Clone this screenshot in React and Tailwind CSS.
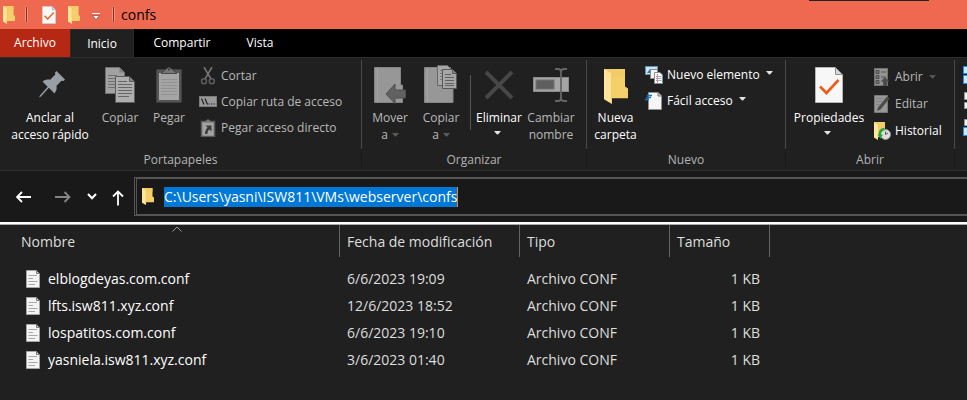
import React from "react";

function FolderIcon({ className, viewBox = "0 0 24 36" }) {
  return (
    <svg viewBox={viewBox} className={className} preserveAspectRatio="none" aria-hidden="true">
      <path d="M0 0H21V18L24 20V30H6Z" fill="#f5cf6a" />
      <path d="M0 0H21V8H6Z" fill="#f0ca66" opacity=".7" />
      <path d="M0 0L8 5V36L0 31Z" fill="#ffe49a" />
      <path d="M7.500 5V35" stroke="#edc664" strokeWidth=".8" />
    </svg>
  );
}

function CheckPageIcon({ className }) {
  return (
    <svg viewBox="0 0 28 36" className={className} aria-hidden="true">
      <path d="M.5.5H20.500L27.500 7.500V35.500H.5Z" fill="#f7f7f7" stroke="#b5b5b5" />
      <path d="M20.500.5V7.500H27.500Z" fill="#d9d9d9" stroke="#8d8d8d" />
      <path d="M5 19.500L11.500 26L23.500 13" fill="none" stroke="#f05a18" strokeWidth="2.600" />
    </svg>
  );
}

function PinIcon() {
  return (
    <svg viewBox="0 0 27 27" className="mt-1 ml-1 h-[27px] w-[27px]" aria-hidden="true">
      <path d="M17.500 0L26 8.500L24.500 10L22.500 9.800L17.500 14.800C18 17.500 17.500 20 15.500 22.500L9.800 16.800L2 25.500L0 26.500L1 24.500L8.700 15.700L3.500 10.500C6 8.800 8.500 8.200 11.200 8.700L16.300 3.500L16 1.500Z" fill="#98a0a6" />
    </svg>
  );
}

function CopyIcon() {
  return (
    <svg viewBox="0 0 30 36" className="h-9 w-[30px]" aria-hidden="true">
      <path d="M.5.5H14.500L19.500 5.500V26.500H.5Z" fill="#a1a1a1" stroke="#717171" />
      <path d="M14.500.5V5.500H19.500Z" fill="#808080" />
      <path d="M3 8.500H12M3 11.500H10M3 14.500H10M3 17.500H10M3 20.500H10" stroke="#707070" />
      <path d="M10.500 9.500H24.500L29.500 14.500V35.500H10.500Z" fill="#aeaeae" stroke="#5c5c5c" />
      <path d="M24.500 9.500V14.500H29.500Z" fill="#888" stroke="#5c5c5c" />
      <path d="M13 14.500H22M13 17.500H27M13 20.500H27M13 23.500H27M13 26.500H27M13 29.500H24" stroke="#666" />
    </svg>
  );
}

function PasteIcon() {
  return (
    <svg viewBox="0 0 26 36" className="h-9 w-[26px]" aria-hidden="true">
      <rect x=".5" y="2.500" width="25" height="33" rx="1" fill="#555" stroke="#404040" />
      <rect x="3" y="6" width="20" height="27" fill="#a5a5a5" />
      <path d="M5 12.500H21M5 15.500H21M5 18.500H21M5 21.500H21M5 24.500H21M5 27.500H21" stroke="#929292" />
      <path d="M5 6.500L10 2.500Q13-1.500 16 2.500L21 6.500Z" fill="#777" stroke="#4a4a4a" />
      <circle cx="13" cy="2.500" r="1" fill="#333" />
    </svg>
  );
}

function ScissorsIcon() {
  return (
    <svg viewBox="0 0 18 18" className="h-[18px] w-[18px]" aria-hidden="true">
      <path d="M5 0L12 12M13 0L6 12" stroke="#777" strokeWidth="1.500" />
      <circle cx="5" cy="14.300" r="2.500" fill="none" stroke="#5f5f5f" strokeWidth="1.400" />
      <circle cx="12.800" cy="14.300" r="2.500" fill="none" stroke="#5f5f5f" strokeWidth="1.400" />
    </svg>
  );
}

function PathIcon() {
  return (
    <svg viewBox="0 0 18 18" className="h-[18px] w-[18px]" aria-hidden="true">
      <rect x=".5" y="3.500" width="17" height="10" fill="#9a9a9a" stroke="#7c7c7c" />
      <path d="M2.500 5.500L5 11.500M6 5.500L8.500 11.500" stroke="#1c1c1c" strokeWidth="1.200" />
      <path d="M9.500 11H10.700M12 11H13.200M14.500 11H15.700" stroke="#1c1c1c" strokeWidth="1.200" />
    </svg>
  );
}

function ShortcutIcon() {
  return (
    <svg viewBox="0 0 18 18" className="h-[18px] w-[18px]" aria-hidden="true">
      <rect x="2.500" y="2.500" width="13" height="15" fill="#a3a3a3" stroke="#5b5b5b" strokeWidth="1.500" />
      <path d="M5 3.500L9 0L13 3.500Z" fill="#777" />
      <path d="M6.500 6.500H12.500V12.500L10.500 10.500C9 11.500 8.500 13 8.500 15H6C6 12 7 10 8.500 8.500Z" fill="#3c3c3c" />
    </svg>
  );
}

function MoveIcon() {
  return (
    <svg viewBox="0 0 32 37" className="h-[37px] w-8" aria-hidden="true">
      <path d="M.5.5H26.500V18H28.500V35.500H.5Z" fill="#979797" stroke="#858585" />
      <path d="M3.500 1V35" stroke="#a4a4a4" />
      <path d="M12 27L21 17V23H31.500V31H21V36.500Z" fill="#616161" stroke="#4f4f4f" />
    </svg>
  );
}

function CopyToIcon() {
  return (
    <svg viewBox="0 0 34 38" className="-mt-0.5 h-[38px] w-[34px]" aria-hidden="true">
      <path d="M.5 2.500H26.500V20H29V37.500H.5Z" fill="#979797" stroke="#858585" />
      <path d="M3.500 3V37" stroke="#a4a4a4" />
      <path d="M13.500.5H23.500L27.500 4.500V20.500H13.500Z" fill="#a6a6a6" stroke="#666" />
      <path d="M16 5.500H22M16 8.500H24M16 11.500H24M16 14.500H24" stroke="#777" />
      <path d="M18.500 4.500H28.500L32.500 8.500V23.500H18.500Z" fill="#a6a6a6" stroke="#585858" />
      <path d="M28.500 4.500V8.500H32.500" fill="#888" stroke="#585858" />
      <path d="M21 9.500H27M21 12.500H30M21 15.500H30M21 18.500H30M21 20.500H30" stroke="#606060" />
    </svg>
  );
}

function DeleteIcon() {
  return (
    <svg viewBox="0 0 30 30" className="mt-[3px] h-[30px] w-[30px]" aria-hidden="true">
      <path d="M2 2L28 28M28 2L2 28" stroke="#474747" strokeWidth="4" />
    </svg>
  );
}

function RenameIcon() {
  return (
    <svg viewBox="0 0 36 34" className="mt-px h-[34px] w-9" aria-hidden="true">
      <rect x=".5" y="9.500" width="35" height="14" fill="#a5a5a5" stroke="#8a8a8a" />
      <rect x="3" y="12" width="18" height="9" fill="#5e5e5e" stroke="#737373" />
      <path d="M22 1H25Q28 1 28 4Q28 1 31 1H34M28 3V30M22 33H25Q28 33 28 30Q28 33 31 33H34" fill="none" stroke="#666" strokeWidth="1.800" />
    </svg>
  );
}

function NewItemIcon() {
  return (
    <svg viewBox="0 0 18 18" className="h-[18px] w-[18px]" aria-hidden="true">
      <rect x=".5" y=".5" width="12" height="8" fill="#c9e4f2" stroke="#5f92ad" />
      <path d="M2 7L5 3L8 7Z" fill="#37758b" />
      <rect x="5.500" y="3.500" width="7" height="9" fill="#f4f4f4" stroke="#888" />
      <path d="M9.500 6.500H15L17.500 9V17.500H9.500Z" fill="#fff" stroke="#8d8d8d" />
      <path d="M11 10.500H16.500M11 12.500H16.500M11 14.500H16.500" stroke="#89aee0" />
      <path d="M12.500 8V17" stroke="#e88" />
    </svg>
  );
}

function EasyAccessIcon() {
  return (
    <svg viewBox="0 0 18 18" className="h-[18px] w-[18px]" aria-hidden="true">
      <path d="M3.500.5H13L16.500 4V17.500H3.500Z" fill="#f5f5f5" stroke="#909090" />
      <path d="M13 .5V4H16.500" fill="#ccc" stroke="#777" />
      <path d="M2 3.500H7M1 5.500H6M0 7.500H4" stroke="#1673bd" strokeWidth="1.300" />
    </svg>
  );
}

function OpenIcon() {
  return (
    <svg viewBox="0 0 18 18" className="h-[18px] w-[18px]" aria-hidden="true">
      <rect x="1.500" y=".5" width="13" height="17" fill="#949494" stroke="#717171" />
      <path d="M3 2.500H6V5.500H3ZM3 7.500H6V10.500H3ZM3 12.500H6V15.500H3Z" fill="#777" stroke="#4c4c4c" />
      <path d="M8 4H13M8 9H13" stroke="#555" />
      <path d="M12 9L16.500 13.500H14V18H10V13.500H7.500Z" fill="#4d4d4d" />
    </svg>
  );
}

function EditIcon() {
  return (
    <svg viewBox="0 0 18 18" className="h-[18px] w-[18px]" aria-hidden="true">
      <path d="M1.500.5H14.500V17.500H1.500Z" fill="#979797" stroke="#777" />
      <path d="M3 3.500H10M3 6.500H9M3 9.500H7" stroke="#858585" />
      <path d="M4 16L5 12.500L14 1.500L16.500 3.500L7.500 14.500Z" fill="#4c4c4c" />
    </svg>
  );
}

function HistoryIcon() {
  return (
    <svg viewBox="0 0 18 18" className="h-[18px] w-[18px]" aria-hidden="true">
      <path d="M1 0H12V15H4Z" fill="#f4cd68" />
      <path d="M1 0L5 3V18L1 15.500Z" fill="#ffe7a0" />
      <circle cx="12.500" cy="12.500" r="5" fill="#ddd" stroke="#989898" />
      <path d="M12.500 9.500V12.500L15 11" fill="none" stroke="#555" />
      <path d="M11.500 7Q6.500 7.500 6.800 13" fill="none" stroke="#22a83a" strokeWidth="2.400" />
      <path d="M4.500 12.500H9.800L7.500 17Z" fill="#22a83a" />
    </svg>
  );
}

function FileIcon() {
  return (
    <svg viewBox="0 0 14 18" className="h-[18px] w-[14px] shrink-0" aria-hidden="true">
      <path d="M.5.5H10.500L13.500 3.500V17.500H.5Z" fill="#f4f4f4" stroke="#a5a5a5" />
      <path d="M10.500.5V3.500H13.500Z" fill="#ddd" stroke="#777" />
      <path d="M2.500 5.500H11M2.500 8.500H7M2.500 11.500H11.500M2.500 14.500H9" stroke="#a8a8a8" />
    </svg>
  );
}

function Caret({ className = "text-[#e4e4e4]" }) {
  return (
    <svg viewBox="0 0 7 4" className={`h-1 w-[7px] shrink-0 ${className}`} aria-hidden="true">
      <path d="M0 0H7L4 3.500H3Z" fill="currentColor" />
    </svg>
  );
}

function BigButton({ icon, lines, className, caret }) {
  return (
    <button type="button" className={`flex shrink-0 flex-col items-center whitespace-nowrap pt-[9px] ${className}`}>
      <span className="flex h-[42px] items-start justify-center">{icon}</span>
      {lines.map((line, i) => (
        <span key={line || "more"} className="flex h-[17px] items-center gap-1 leading-[17px]">
          {line}
          {caret && i === lines.length - 1 && <Caret className={caret} />}
        </span>
      ))}
    </button>
  );
}

function SmallButton({ icon, label, className = "", caret }) {
  return (
    <button type="button" className={`flex items-center gap-1 whitespace-nowrap ${className}`}>
      {icon}
      <span>{label}</span>
      {caret && <Caret className={`ml-0.5 ${caret}`} />}
    </button>
  );
}

function Group({ title, className, children }) {
  return (
    <section className={`flex shrink-0 flex-col ${className}`}>
      <div className="mt-0.5 flex h-[89px] border-r border-[#4a4a4a]">
        <div className="-mt-0.5 flex flex-1">{children}</div>
      </div>
      <h2 className="h-[18px] border-r border-[#191919] pt-0.5 text-center leading-[18px] text-[#b4b4b4]">{title}</h2>
    </section>
  );
}

function BarDivider({ className }) {
  return <span className={`h-[17px] w-[3px] rounded-sm border border-[#f58e7a] bg-[#7e3428] ${className}`} />;
}

const files = [
  ["elblogdeyas.com.conf", "6/6/2023 19:09"],
  ["lfts.isw811.xyz.conf", "12/6/2023 18:52"],
  ["lospatitos.com.conf", "6/6/2023 19:10"],
  ["yasniela.isw811.xyz.conf", "3/6/2023 01:40"],
];

const dim = "text-[#b9b9b9]";

export default function App() {
  return (
    <div className="flex min-h-screen flex-col overflow-hidden bg-[#202020] font-['Open_Sans','Noto_Sans',sans-serif] text-[13px] text-white">
      <header className="relative flex h-[29px] items-center bg-[#ef6950] text-black">
        <div className="absolute left-[809px] top-0 h-px w-[120px] bg-[#222]" />
        <FolderIcon className="ml-[3px] h-[18px] w-3" />
        <BarDivider className="ml-[10px]" />
        <button type="button" aria-label="Propiedades" className="ml-[14px]"><CheckPageIcon className="h-[18px] w-[14px]" /></button>
        <button type="button" aria-label="Nueva carpeta" className="ml-3"><FolderIcon className="h-[18px] w-3" /></button>
        <button type="button" aria-label="Personalizar barra" className="ml-3 mt-1">
          <svg viewBox="0 0 8 7" className="h-[7px] w-2"><path d="M0 .5H8" stroke="#fff" /><path d="M.5 2.500H7.500L4 6.500Z" fill="#fff" stroke="#5c2a20" strokeWidth=".5" /></svg>
        </button>
        <BarDivider className="ml-3" />
        <h1 className="ml-1.5 text-[14px]">confs</h1>
      </header>

      <nav className="flex h-7 bg-black text-[12px]">
        <button type="button" className="w-[70px] bg-[#b52813]">Archivo</button>
        <button type="button" className="-mb-px w-16 border-x border-t border-[#2b2b2b] bg-[#202020]">Inicio</button>
        <button type="button" className="w-24">Compartir</button>
        <button type="button" className="w-[60px]">Vista</button>
      </nav>

      <div className="flex h-[114px] overflow-hidden border-y border-[#2d2d2d] text-[12px]">
        <Group title="Portapapeles" className="w-[362px]">
          <BigButton className="w-[100px]" icon={<PinIcon />} lines={["Anclar al", "acceso rápido"]} />
          <BigButton className={`w-10 ${dim}`} icon={<CopyIcon />} lines={["Copiar"]} />
          <BigButton className={`w-[58px] ${dim}`} icon={<PasteIcon />} lines={["Pegar"]} />
          <div className={`ml-px flex flex-col pt-[5px] ${dim}`}>
            <SmallButton className="h-[26px]" icon={<ScissorsIcon />} label="Cortar" />
            <SmallButton className="h-[26px]" icon={<PathIcon />} label="Copiar ruta de acceso" />
            <SmallButton className="h-[26px]" icon={<ShortcutIcon />} label="Pegar acceso directo" />
          </div>
        </Group>
        <Group title="Organizar" className="w-[225px]">
          <BigButton className={`w-14 ${dim}`} icon={<MoveIcon />} lines={["Mover", "a"]} caret="text-[#5b5b5b]" />
          <BigButton className={`w-[46px] ${dim}`} icon={<CopyToIcon />} lines={["Copiar", "a"]} caret="text-[#5b5b5b]" />
          <span className="ml-1.5 mt-[17px] h-[55px] w-px bg-[#565656]" />
          <BigButton className="w-14" icon={<DeleteIcon />} lines={["Eliminar", ""]} caret="-ml-1 -mt-1 text-[#e4e4e4]" />
          <BigButton className={`w-12 ${dim}`} icon={<RenameIcon />} lines={["Cambiar", "nombre"]} />
        </Group>
        <Group title="Nuevo" className="w-[199px]">
          <BigButton className="w-[57px]" icon={<FolderIcon className="mt-0.5 h-[35px] w-6" />} lines={["Nueva", "carpeta"]} />
          <div className="ml-px flex flex-col pt-1">
            <SmallButton className="h-[26px]" icon={<NewItemIcon />} label="Nuevo elemento" caret="-mt-1 text-[#e4e4e4]" />
            <SmallButton className="h-[26px]" icon={<EasyAccessIcon />} label="Fácil acceso" caret="-mt-1 text-[#e4e4e4]" />
          </div>
        </Group>
        <Group title="Abrir" className="w-[169px]">
          <BigButton className="w-[86px]" icon={<CheckPageIcon className="h-9 w-7" />} lines={["Propiedades", ""]} caret="-ml-1 -mt-1 text-[#e4e4e4]" />
          <div className="ml-px flex flex-col pt-[5px]">
            <SmallButton className={`h-[27px] ${dim}`} icon={<OpenIcon />} label="Abrir" caret="text-[#555]" />
            <SmallButton className={`h-[27px] ${dim}`} icon={<EditIcon />} label="Editar" />
            <SmallButton className="h-[27px]" icon={<HistoryIcon />} label="Historial" />
          </div>
        </Group>
        <svg viewBox="0 0 20 72" className="ml-2 mt-2 h-[72px] w-5 shrink-0" aria-hidden="true">
          <path d="M.5.5H19.500V7.500H.5ZM.5 9.500H19.500V17.500H.5Z" fill="#cde8ff" stroke="#2a90e0" />
          <path d="M1.500 26.500H19.500V33.500H1.500ZM1.500 36.500H19.500V42.500H1.500Z" fill="#f2f2f2" stroke="#999" />
          <path d="M1.500 53.500H19.500V59.500H1.500Z" fill="#f2f2f2" stroke="#999" />
          <path d="M.5 61.500H19.500V69.500H.5Z" fill="#cde8ff" stroke="#2a90e0" />
        </svg>
      </div>

      <div className="flex h-[51px] items-center bg-[#191919]">
        <button type="button" aria-label="Atrás" className="ml-4">
          <svg viewBox="0 0 16 12" className="h-3 w-4"><path d="M15 6H1.500M6 1L1 6L6 11" fill="none" stroke="#fff" strokeWidth="1.800" /></svg>
        </button>
        <button type="button" aria-label="Adelante" className="ml-[23px]">
          <svg viewBox="0 0 16 12" className="h-3 w-4"><path d="M0 6H14M9.500 1L14.500 6L9.500 11" fill="none" stroke="#858585" strokeWidth="1.800" /></svg>
        </button>
        <button type="button" aria-label="Ubicaciones recientes" className="ml-4">
          <svg viewBox="0 0 10 7" className="h-[7px] w-2.5"><path d="M1 1L5 5.300L9 1" fill="none" stroke="#fff" strokeWidth="2" /></svg>
        </button>
        <button type="button" aria-label="Subir" className="ml-[15px] mt-0.5">
          <svg viewBox="0 0 12 16" className="h-4 w-3"><path d="M6 15.500V1.500M1 6.500L6 1.500L11 6.500" fill="none" stroke="#fff" strokeWidth="1.800" /></svg>
        </button>
        <label className="-mr-1 ml-[10px] flex h-[39px] flex-1 items-center border-y-2 border-l-[3px] border-[#555] [border-left-style:double]">
          <FolderIcon className="ml-[5px] h-[17px] w-3" />
          <input
            aria-label="Dirección"
            readOnly
            value={"C:\\Users\\yasni\\ISW811\\VMs\\webserver\\confs"}
            className="ml-[10px] h-5 border-r border-[#f0802a] bg-[#0078d7] text-[14px] text-white outline-none field-sizing-content"
          />
        </label>
      </div>

      <main className="relative flex-1 border-t-2 border-white">
        <div className="h-px bg-[#aaa]" />
        <svg viewBox="0 0 10 6" className="absolute left-[172px] top-0.5 h-1.5 w-2.5" aria-hidden="true"><path d="M.5 5.500L5 1L9.500 5.500" fill="none" stroke="#999" /></svg>
        <table className="w-full table-fixed border-collapse text-[14px]">
          <colgroup>
            <col className="w-[340px]" /><col className="w-[180px]" /><col className="w-[150px]" /><col className="w-[100px]" /><col />
          </colgroup>
          <thead>
            <tr className="h-8 text-left text-[#dedede]">
              <th className="p-0 pl-[21px] font-normal shadow-[inset_-1px_0_#636363]">Nombre</th>
              <th className="p-0 pl-[7px] font-normal shadow-[inset_-1px_0_#636363]">Fecha de modificación</th>
              <th className="p-0 pl-[7px] font-normal shadow-[inset_-1px_0_#636363]">Tipo</th>
              <th className="p-0 pl-[7px] font-normal shadow-[inset_-1px_0_#636363]">Tamaño</th>
              <td />
            </tr>
          </thead>
          <tbody className="before:block before:h-2">
            {files.map(([name, date]) => (
              <tr key={name} className="h-[27px] text-[#dedede]">
                <td className="p-0 pl-[26px] text-white">
                  <span className="flex items-center gap-2"><FileIcon />{name}</span>
                </td>
                <td className="p-0 pl-[7px]">{date}</td>
                <td className="p-0 pl-[7px]">Archivo CONF</td>
                <td className="p-0 pr-[10px] text-right">1 KB</td>
                <td />
              </tr>
            ))}
          </tbody>
        </table>
      </main>
    </div>
  );
}
